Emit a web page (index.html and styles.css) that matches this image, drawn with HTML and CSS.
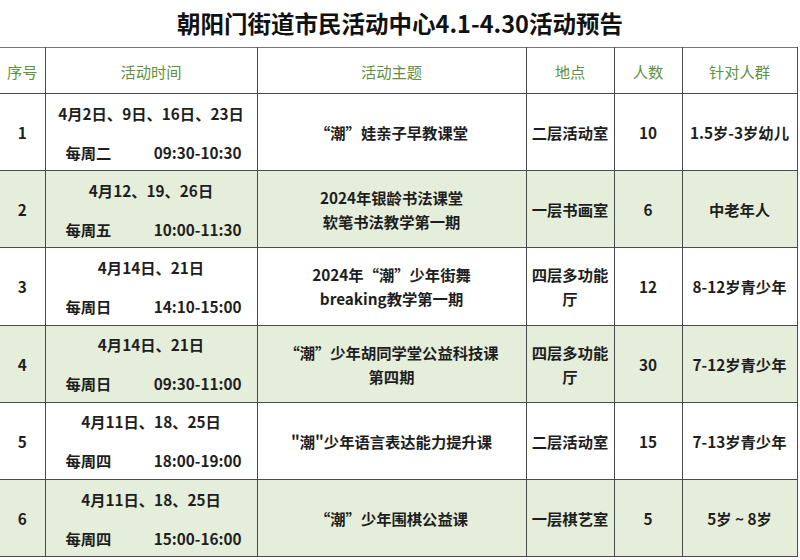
FILE: index.html
```html
<!DOCTYPE html>
<html lang="zh-CN">
<head>
<meta charset="utf-8">
<link rel="stylesheet" href="styles.css">
</head>
<body>
<div class="page">
  <h1 class="title">朝阳门街道市民活动中心4.1-4.30活动预告</h1>
  <table class="sched">
    <colgroup>
      <col class="c-no"><col class="c-time"><col class="c-theme"><col class="c-place"><col class="c-num"><col class="c-aud">
    </colgroup>
    <thead>
      <tr><th>序号</th><th>活动时间</th><th>活动主题</th><th>地点</th><th>人数</th><th>针对人群</th></tr>
    </thead>
    <tbody>
      <tr>
        <td>1</td>
        <td><div class="when"><div class="date">4月2日、9日、16日、23日</div><div class="wk"><span>每周二</span><span>09:30-10:30</span></div></div></td>
        <td>“潮”娃亲子早教课堂</td>
        <td>二层活动室</td>
        <td>10</td>
        <td>1.5岁-3岁幼儿</td>
      </tr>
      <tr class="alt">
        <td>2</td>
        <td><div class="when"><div class="date">4月12、19、26日</div><div class="wk"><span>每周五</span><span>10:00-11:30</span></div></div></td>
        <td>2024年银龄书法课堂<br>软笔书法教学第一期</td>
        <td>一层书画室</td>
        <td>6</td>
        <td>中老年人</td>
      </tr>
      <tr>
        <td>3</td>
        <td><div class="when"><div class="date">4月14日、21日</div><div class="wk"><span>每周日</span><span>14:10-15:00</span></div></div></td>
        <td>2024年“潮”少年街舞<br>breaking教学第一期</td>
        <td>四层多功能厅</td>
        <td>12</td>
        <td>8-12岁青少年</td>
      </tr>
      <tr class="alt">
        <td>4</td>
        <td><div class="when"><div class="date">4月14日、21日</div><div class="wk"><span>每周日</span><span>09:30-11:00</span></div></div></td>
        <td>“潮”少年胡同学堂公益科技课<br>第四期</td>
        <td>四层多功能厅</td>
        <td>30</td>
        <td>7-12岁青少年</td>
      </tr>
      <tr>
        <td>5</td>
        <td><div class="when"><div class="date">4月11日、18、25日</div><div class="wk"><span>每周四</span><span>18:00-19:00</span></div></div></td>
        <td>"潮"少年语言表达能力提升课</td>
        <td>二层活动室</td>
        <td>15</td>
        <td>7-13岁青少年</td>
      </tr>
      <tr class="alt">
        <td>6</td>
        <td><div class="when"><div class="date">4月11日、18、25日</div><div class="wk"><span>每周四</span><span>15:00-16:00</span></div></div></td>
        <td>“潮”少年围棋公益课</td>
        <td>一层棋艺室</td>
        <td>5</td>
        <td>5岁 ~ 8岁</td>
      </tr>
    </tbody>
  </table>
</div>
</body>
</html>
```

FILE: styles.css
```css
html, body {
  margin: 0;
  padding: 0;
  background: #ffffff;
}
body {
  font-family: "Noto Sans CJK SC", "Noto Sans", sans-serif;
  color: #1e1e1e;
}
.page {
  width: 800px;
  height: 560px;
  overflow: hidden;
}
.title {
  margin: 0;
  height: 47px;
  line-height: 46px;
  text-align: center;
  font-size: 23.5px;
  font-weight: 700;
  color: #111;
}
.sched {
  width: 797px;
  table-layout: fixed;
  border-collapse: collapse;
  font-size: 15.3px;
  font-weight: 700;
}
.c-no { width: 45px; }
.c-time { width: 212px; }
.c-theme { width: 269px; }
.c-place { width: 88px; }
.c-num { width: 68px; }
.c-aud { width: 115px; }
.sched th, .sched td {
  border: 1.5px solid #4a4a4a;
  text-align: center;
  vertical-align: middle;
  padding: 0 3px;
  line-height: 24px;
}
.sched th:first-child, .sched td:first-child {
  border-left: none;
}
.sched th {
  height: 45px;
  font-weight: 400;
  color: #5f9140;
  border-top-color: #777;
}
.sched td {
  height: 76.2px;
}
.sched tr.alt td {
  background: #e5eedb;
}
.when {
  display: flex;
  flex-direction: column;
  gap: 19px;
  line-height: 20px;
}
.date {
  text-align: center;
}
.wk {
  display: flex;
  justify-content: space-between;
  padding: 0 12px 0 17px;
}
```
